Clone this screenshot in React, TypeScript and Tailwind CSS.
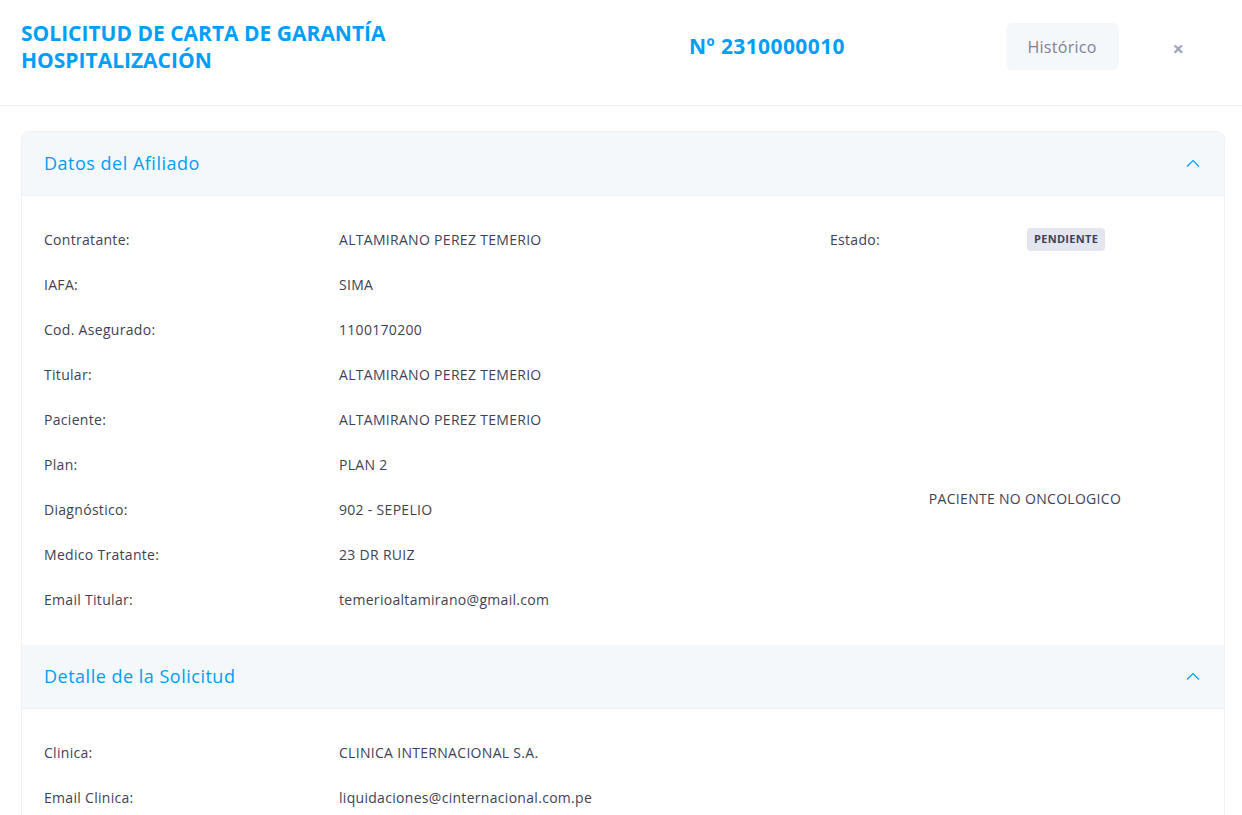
import React from 'react';

const afiliado: [string, string][] = [
    ['Contratante:', 'ALTAMIRANO PEREZ TEMERIO'],
    ['IAFA:', 'SIMA'],
    ['Cod. Asegurado:', '1100170200'],
    ['Titular:', 'ALTAMIRANO PEREZ TEMERIO'],
    ['Paciente:', 'ALTAMIRANO PEREZ TEMERIO'],
    ['Plan:', 'PLAN 2'],
    ['Diagnóstico:', '902 - SEPELIO'],
    ['Medico Tratante:', '23 DR RUIZ'],
    ['Email Titular:', 'temerioaltamirano@gmail.com'],
];

const solicitud: [string, string][] = [
    ['Clinica:', 'CLINICA INTERNACIONAL S.A.'],
    ['Email Clinica:', 'liquidaciones@cinternacional.com.pe'],
];

function Chevron() {
    return (
        <svg className="w-[16px] h-[16px] text-[#009ef7]" viewBox="0 0 16 16" fill="none" stroke="currentColor" strokeWidth={1.2}>
            <path d="M2 10.5L8 4.5l6 6" />
        </svg>
    );
}

function SectionHeader({ title }: { title: string }) {
    return (
        <div className="h-[64px] bg-[#f5f8fa] border-b border-[#eff2f5] flex items-center justify-between pl-[22px] pr-[23px]">
            <h3 className="text-[18px] tracking-[0.5px] text-[#009ef7]">{title}</h3>
            <Chevron />
        </div>
    );
}

export default function App() {
    return (
        <div className="w-[1242px] h-[815px] overflow-hidden bg-white text-[#3f4254]" style={{ fontFamily: '"Open Sans", sans-serif' }}>

            {/* MODAL HEADER */}
            <div className="h-[106px] border-b border-[#eff2f5] flex items-start pt-[20px] pl-[21px] pr-[58px]">
                <h2 className="w-[420px] text-[21px] font-bold leading-[27px] text-[#009ef7]">
                    SOLICITUD DE CARTA DE GARANTÍA<br />HOSPITALIZACIÓN
                </h2>
                <div className="mt-[13px] ml-[248px] text-[21px] leading-[27px] font-bold text-[#009ef7] tracking-[0.4px]">Nº 2310000010</div>
                <button className="mt-[3px] ml-auto w-[113px] h-[47px] rounded-[6px] bg-[#f5f8fa] text-[16px] tracking-[0.3px] text-[#7e8299]">Histórico</button>
                <span className="mt-[19px] ml-[54px] text-[#a1a5b7] text-[20px] font-bold leading-none">×</span>
            </div>

            {/* CONTENT */}
            <div className="pl-[21px] pr-[17px] pt-[25px]">
                <div className="border border-[#eff2f5] rounded-[8px] overflow-hidden">
                    <SectionHeader title="Datos del Afiliado" />
                    <div className="px-[22px] pt-[21px] pb-[23px] grid grid-cols-[295px_491px_197px_1fr] text-[14px] tracking-[0.3px]">
                        {afiliado.map(([label, value], i) => (
                            <React.Fragment key={label}>
                                <div className="h-[45px] flex items-center" style={{ gridRow: i + 1, gridColumn: 1 }}>{label}</div>
                                <div className="h-[45px] flex items-center" style={{ gridRow: i + 1, gridColumn: 2 }}>{value}</div>
                            </React.Fragment>
                        ))}
                        <div className="h-[45px] flex items-center col-start-3 row-start-1">Estado:</div>
                        <div className="h-[45px] flex items-center col-start-4 row-start-1">
                            <span className="px-[7px] py-[3px] rounded-[4px] bg-[#e4e6ef] text-[11px] tracking-[0.3px] font-bold text-[#3f4254]">PENDIENTE</span>
                        </div>
                        <div className="col-start-3 col-span-2 row-start-2 row-span-8 flex justify-center pl-[18px] pt-[226px]">
                            <span>PACIENTE NO ONCOLOGICO</span>
                        </div>
                    </div>
                    <SectionHeader title="Detalle de la Solicitud" />
                    <div className="px-[22px] pt-[21px] pb-[23px] grid grid-cols-[295px_1fr] text-[14px] tracking-[0.3px]">
                        {solicitud.map(([label, value]) => (
                            <React.Fragment key={label}>
                                <div className="h-[45px] flex items-center">{label}</div>
                                <div className="h-[45px] flex items-center">{value}</div>
                            </React.Fragment>
                        ))}
                    </div>
                </div>
            </div>
        </div>
    );
}
